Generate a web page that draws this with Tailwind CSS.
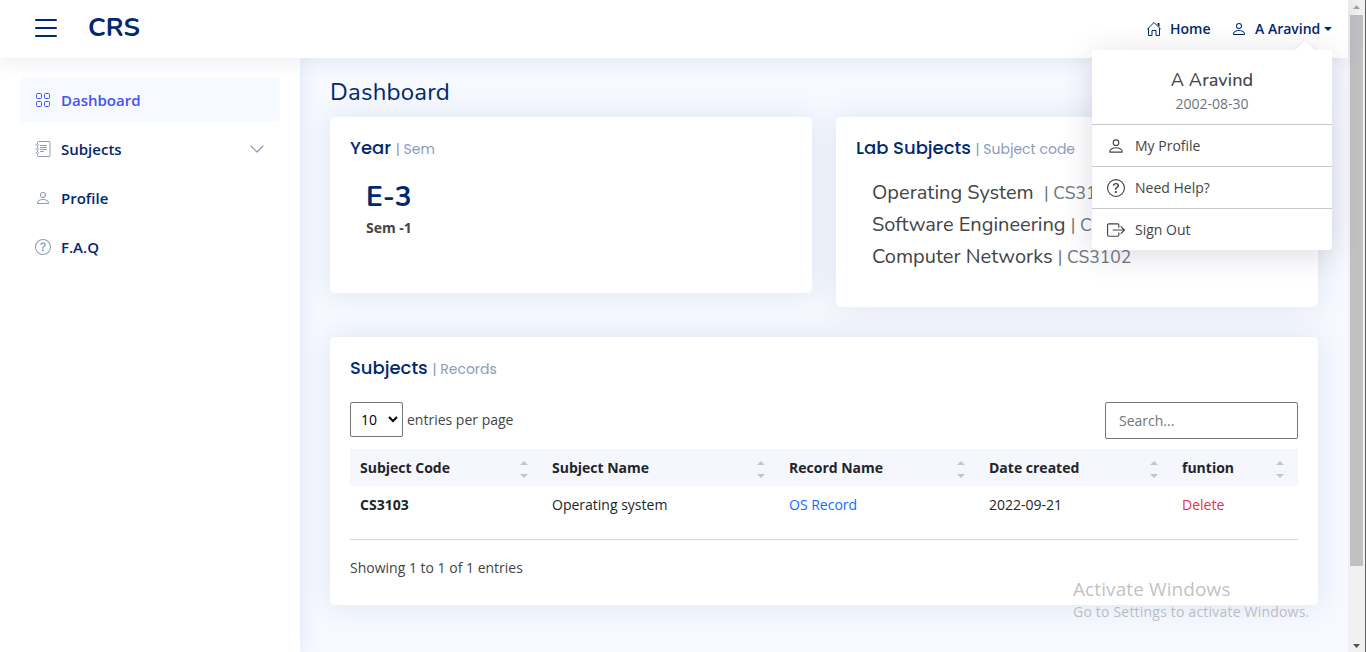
<!DOCTYPE html>
<html lang="en">
<head>
<meta charset="utf-8">
<title>CRS Dashboard</title>
<script src="https://cdn.jsdelivr.net/npm/@tailwindcss/browser@4"></script>
</head>
<body class="h-[652px] w-[1366px] overflow-hidden bg-[#f6f9ff] font-['Open_Sans',sans-serif] text-sm text-[#444]">
<svg class="hidden">
  <symbol id="person" viewBox="0 0 16 16"><path d="M8 8a3 3 0 1 0 0-6 3 3 0 0 0 0 6zm2-3a2 2 0 1 1-4 0 2 2 0 0 1 4 0zm4 8c0 1-1 1-1 1H3s-1 0-1-1 1-4 6-4 6 3 6 4zm-1-.004c-.001-.246-.154-.986-.832-1.664C11.516 10.68 10.289 10 8 10c-2.290 0-3.516.68-4.168 1.332-.678.678-.83 1.418-.832 1.664h10z"/></symbol>
  <symbol id="question" viewBox="0 0 16 16"><path d="M8 15A7 7 0 1 1 8 1a7 7 0 0 1 0 14zm0 1A8 8 0 1 0 8 0a8 8 0 0 0 0 16z"/><path d="M5.255 5.786a.237.237 0 0 0 .241.247h.825c.138 0 .248-.113.266-.25.09-.656.54-1.134 1.342-1.134.686 0 1.314.343 1.314 1.168 0 .635-.374.927-.965 1.371-.673.489-1.206 1.06-1.168 1.987l.003.217a.25.25 0 0 0 .25.246h.811a.25.25 0 0 0 .25-.25v-.105c0-.718.273-.927 1.01-1.486.609-.463 1.244-.977 1.244-2.056 0-1.511-1.276-2.241-2.673-2.241-1.267 0-2.655.59-2.75 2.286zm1.557 5.763c0 .533.425.927 1.01.927.609 0 1.028-.394 1.028-.927 0-.552-.42-.94-1.029-.94-.584 0-1.009.388-1.009.94z"/></symbol>
  <symbol id="sort" viewBox="0 0 8 17"><path d="M0 4 4 0l4 4zM0 13h8l-4 4z"/></symbol>
</svg>
<div class="flex h-full">
  <div class="flex h-full w-[1348px] flex-col">
    <header class="relative z-20 flex h-[58px] shrink-0 items-center bg-white pl-[34px] shadow-[0_2px_20px_rgba(1,41,112,0.1)]">
      <svg class="h-6 w-6" viewBox="0 0 24 24" stroke="#012970" stroke-width="2" stroke-linecap="round"><path d="M2 3h20M2 11h20M2 19h20"/></svg>
      <div class="ml-[30px] mb-0.5 w-[80px] whitespace-nowrap font-[Nunito,Lato,sans-serif] text-[26px] font-bold leading-8 text-[#012970]">CRS</div>
      <nav class="ml-auto flex items-center pr-4 font-semibold text-[#012970]">
        <svg class="mr-2 h-4 w-4" viewBox="0 0 16 16" fill="none" stroke="#012970" stroke-linecap="round" stroke-linejoin="round"><path d="M1.500 8 8 1.500 14.500 8M2.500 7.500v7H6v-5h4v5h3.500v-7"/><path d="M11.500 2h2v4l-2-2z" fill="#012970" stroke="none"/></svg>
        <span class="w-[62px]">Home</span>
        <svg class="ml-[-1px] mr-2 h-4 w-4" fill="#012970"><use href="#person"/></svg>
        <span class="w-[66px] whitespace-nowrap">A Aravind</span>
        <svg class="ml-[3px] h-1 w-2" viewBox="0 0 8 4" fill="#012970"><path d="M0 0h8L4 4z"/></svg>
      </nav>
      <div class="absolute left-[1092px] top-[50px] w-[240px] rounded bg-white shadow-[0_5px_30px_rgba(82,63,105,0.2)]">
        <div class="absolute -top-[7px] left-[206px] h-[14px] w-[14px] rotate-45 bg-white shadow-[-1px_-1px_2px_rgba(82,63,105,0.08)]"></div>
        <div class="relative rounded bg-white">
          <div class="flex h-[75px] flex-col items-center border-b border-[#c7c8ca] pt-[18px]">
            <div class="font-[Nunito,Lato,sans-serif] text-lg font-medium leading-6 tracking-[0.1px]">A Aravind</div>
            <div class="text-sm leading-6 text-[#6c757d]">2002-08-30</div>
          </div>
          <div class="flex h-[42px] items-center border-b border-[#c7c8ca] pl-[15px]"><svg class="mr-[10px] h-[18px] w-[18px]" fill="#444"><use href="#person"/></svg>My Profile</div>
          <div class="flex h-[42px] items-center border-b border-[#c7c8ca] pl-[15px]"><svg class="mr-[10px] h-[18px] w-[18px]" fill="#444"><use href="#question"/></svg>Need Help?</div>
          <div class="flex h-[41px] items-center pl-[15px]"><svg class="mr-[10px] h-[18px] w-[18px]" viewBox="0 0 16 16" fill="#444"><path d="M10 12.500a.5.5 0 0 1-.5.5h-8a.5.5 0 0 1-.5-.5v-9a.5.5 0 0 1 .5-.5h8a.5.5 0 0 1 .5.5v2a.5.5 0 0 0 1 0v-2A1.500 1.500 0 0 0 9.500 2h-8A1.500 1.500 0 0 0 0 3.500v9A1.500 1.500 0 0 0 1.500 14h8a1.500 1.500 0 0 0 1.500-1.500v-2a.5.5 0 0 0-1 0v2z"/><path d="M15.854 8.354a.5.5 0 0 0 0-.708l-3-3a.5.5 0 0 0-.708.708L14.293 7.500H5.500a.5.5 0 0 0 0 1h8.793l-2.147 2.146a.5.5 0 0 0 .708.708l3-3z"/></svg>Sign Out</div>
        </div>
      </div>
    </header>
    <div class="flex min-h-0 flex-1">
      <aside class="z-10 flex w-[300px] shrink-0 flex-col gap-[5px] bg-white p-5 text-[15px] font-semibold text-[#012970] shadow-[0_0_20px_rgba(1,41,112,0.1)]">
        <div class="flex h-11 items-center rounded bg-[#f6f9ff] pl-[15px] text-[#4154f1]">
          <svg class="mr-[10px] h-4 w-4" viewBox="0 0 16 16" fill="none" stroke="#4154f1"><rect x="1.500" y="1.500" width="5" height="5" rx="1"/><rect x="9.500" y="1.500" width="5" height="5" rx="1"/><rect x="1.500" y="9.500" width="5" height="5" rx="1"/><rect x="9.500" y="9.500" width="5" height="5" rx="1"/></svg><span class="pt-0.5">Dashboard</span></div>
        <div class="flex h-11 items-center pl-[15px] pr-4">
          <svg class="mr-[10px] h-4 w-4" viewBox="0 0 16 16" fill="none" stroke="#899bbd" stroke-linecap="round"><path d="M2.500 2.500V1.500a1 1 0 0 1 1-1h10.500a1 1 0 0 1 1 1v13a1 1 0 0 1-1 1H3.500a1 1 0 0 1-1-1v-1M2.500 5.500v1M2.500 9.500v1M.8 4h3M.8 8h3M.8 12h3M5.500 4.500h6M5.500 6.500h6M5.500 8.500h6M5.500 10.500h3"/></svg><span class="pt-0.5">Subjects</span>
          <svg class="ml-auto h-4 w-[14px]" viewBox="0 0 14 16" fill="none" stroke="#899bbd" stroke-width="1.200" stroke-linecap="round" stroke-linejoin="round"><path d="M1 5l6 6 6-6"/></svg></div>
        <div class="flex h-11 items-center pl-[15px]"><svg class="mr-[10px] h-4 w-4" fill="#899bbd"><use href="#person"/></svg><span class="pt-0.5">Profile</span></div>
        <div class="flex h-11 items-center pl-[15px]"><svg class="mr-[10px] h-4 w-4" fill="#899bbd"><use href="#question"/></svg><span class="pt-0.5">F.A.Q</span></div>
      </aside>
      <main class="flex flex-1 flex-col px-[30px] pt-5">
        <h1 class="h-[39px] whitespace-nowrap font-[Nunito,Lato,sans-serif] text-2xl leading-7 tracking-[0.2px] text-[#012970]">Dashboard</h1>
        <div class="flex items-start gap-6">
          <section class="h-[176px] w-[482px] rounded-[5px] bg-white px-5 pt-[17px] shadow-[0_0_30px_rgba(1,41,112,0.1)]">
            <h2 class="font-[Poppins,Lato,sans-serif] text-lg font-medium leading-7 text-[#012970]">Year <span class="text-sm font-normal text-[#899bbd]">| Sem</span></h2>
            <div class="pl-4 pt-[18px]">
              <div class="font-[Nunito,Lato,sans-serif] text-[28px] font-bold leading-[34px] text-[#012970]">E-3</div>
              <div class="mt-1 font-bold leading-5">Sem -1</div>
            </div>
          </section>
          <section class="h-[190px] w-[482px] whitespace-nowrap rounded-[5px] bg-white px-5 pt-[17px] shadow-[0_0_30px_rgba(1,41,112,0.1)]">
            <h2 class="font-[Poppins,Lato,sans-serif] text-lg font-medium leading-7 text-[#012970]">Lab Subjects <span class="text-sm font-normal text-[#899bbd]">| Subject code</span></h2>
            <div class="pl-4 pt-[15px] font-[Nunito,Lato,sans-serif] text-xl leading-8">
              <div>Operating System &nbsp;<span class="text-[17.5px] text-[#6c757d]">| CS3103</span></div>
              <div>Software Engineering <span class="text-[17.5px] text-[#6c757d]">| CS3101</span></div>
              <div>Computer Networks <span class="text-[17.5px] text-[#6c757d]">| CS3102</span></div>
            </div>
          </section>
        </div>
        <section class="mt-[30px] h-[268px] rounded-[5px] bg-white px-5 pt-[17px] shadow-[0_0_30px_rgba(1,41,112,0.1)]">
          <h2 class="font-[Poppins,Lato,sans-serif] text-lg font-medium leading-7 text-[#012970]">Subjects <span class="text-sm font-normal text-[#899bbd]">| Records</span></h2>
          <div class="mt-5 flex h-[37px] items-start">
            <div class="flex h-[35px] w-[53px] items-center rounded-[2px] border border-[#767676] pl-[10px] text-black">10
              <svg class="ml-auto mr-1 h-[7px] w-[10px]" viewBox="0 0 10 7" fill="none" stroke="#000" stroke-width="2"><path d="m1 1 4 4 4-4"/></svg></div>
            <span class="ml-1 leading-[35px]">entries per page</span>
            <div class="ml-auto flex h-[37px] w-[193px] items-center rounded-[2px] border border-[#767676] pl-[13px] text-[#757575]">Search...</div>
          </div>
          <div class="mt-[10px] grid h-[37px] grid-cols-[192px_237px_200px_193px_126px] bg-[#f6f6fe] font-bold text-[#212529]">
            <div class="flex items-center justify-between pl-[10px] pr-[14px]">Subject Code<svg class="mt-1 h-[17px] w-2" fill="#c4c4ca"><use href="#sort"/></svg></div>
            <div class="flex items-center justify-between pl-[10px] pr-[14px]">Subject Name<svg class="mt-1 h-[17px] w-2" fill="#c4c4ca"><use href="#sort"/></svg></div>
            <div class="flex items-center justify-between pl-[10px] pr-[14px]">Record Name<svg class="mt-1 h-[17px] w-2" fill="#c4c4ca"><use href="#sort"/></svg></div>
            <div class="flex items-center justify-between pl-[10px] pr-[14px]">Date created<svg class="mt-1 h-[17px] w-2" fill="#c4c4ca"><use href="#sort"/></svg></div>
            <div class="flex items-center justify-between pl-[10px] pr-[14px]">funtion<svg class="mt-1 h-[17px] w-2" fill="#c4c4ca"><use href="#sort"/></svg></div>
          </div>
          <div class="grid h-[54px] grid-cols-[192px_237px_200px_193px_126px] border-b border-[#d9d9d9] leading-[37px] text-[#212529]">
            <div class="pl-[10px] font-bold">CS3103</div>
            <div class="pl-[10px]">Operating system</div>
            <div class="pl-[10px] text-[#0d6efd]">OS Record</div>
            <div class="pl-[10px]">2022-09-21</div>
            <div class="pl-[10px] text-[#dc3545]">Delete</div>
          </div>
          <div class="mt-[18px] leading-5">Showing 1 to 1 of 1 entries</div>
        </section>
      </main>
    </div>
  </div>
  <div class="flex w-[18px] flex-col border-r border-[#606060] bg-[#f1f1f1]">
    <svg class="ml-[5px] mt-[5px] h-1 w-[7px]" viewBox="0 0 7 4" fill="#a3a3a3"><path d="M0 4h7L3.500 0z"/></svg>
    <div class="ml-[2px] mt-[6px] h-[551px] w-[13px] bg-[#c1c1c1]"></div>
    <svg class="mb-1 ml-[5px] mt-auto h-1 w-[7px]" viewBox="0 0 7 4" fill="#505050"><path d="M0 0h7L3.500 4z"/></svg>
  </div>
</div>
<div class="pointer-events-none absolute left-[1073px] top-[577px] z-30 whitespace-nowrap text-[#8c8c8c]/55">
  <div class="text-[19px] leading-6 tracking-[0.1px]">Activate Windows</div>
  <div class="pt-px text-sm leading-5 tracking-[0.2px]">Go to Settings to activate Windows.</div>
</div>
</body>
</html>
